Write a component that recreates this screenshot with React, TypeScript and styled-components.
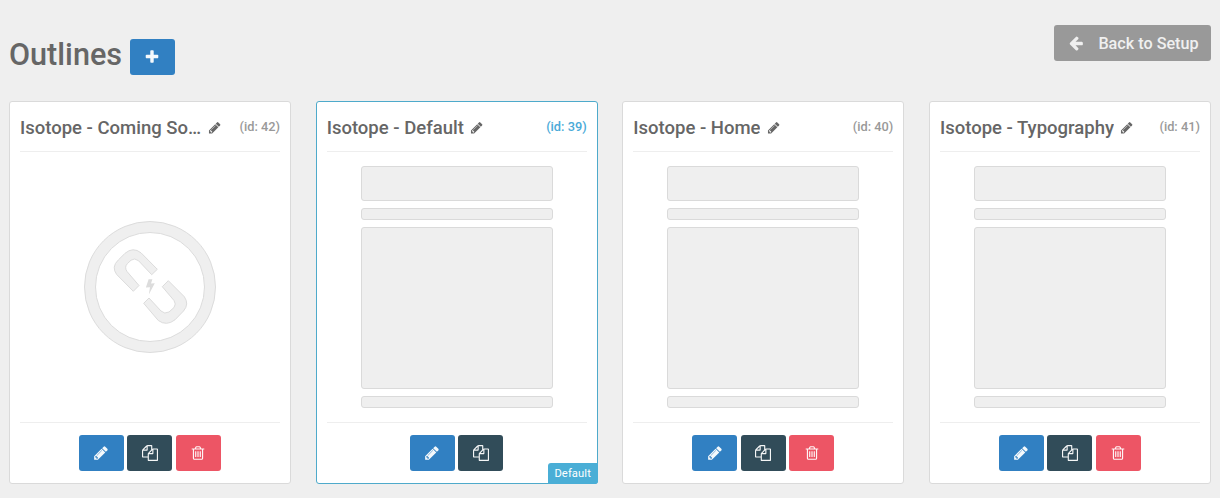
import React from 'react';
import styled, { createGlobalStyle } from 'styled-components';

const GlobalStyle = createGlobalStyle`
  *, *::before, *::after { box-sizing: border-box; }
  body {
    margin: 0;
    background: #efefef;
    color: #666;
    font: 500 16px/24px Roboto, "Liberation Sans", sans-serif;
    -webkit-font-smoothing: antialiased;
  }
`;

const icons = {
  plus: 'M1600 736v192q0 40-28 68t-68 28h-416v416q0 40-28 68t-68 28h-192q-40 0-68-28t-28-68v-416h-416q-40 0-68-28t-28-68v-192q0-40 28-68t68-28h416v-416q0-40 28-68t68-28h192q40 0 68 28t28 68v416h416q40 0 68 28t28 68z',
  back: 'M1664 896v128q0 53-32.5 90.5t-84.5 37.5h-704l293 294q38 36 38 90t-38 90l-75 76q-37 37-90 37-52 0-91-37l-651-652q-37-37-37-90 0-52 37-91l651-650q38-38 91-38 52 0 90 38l75 74q38 38 38 91t-38 91l-293 293h704q52 0 84.5 37.5t32.5 90.5z',
  pencil: 'M491 1536l91-91-235-235-91 91v107h128v128h107zm523-928q0-22-22-22-10 0-17 7l-542 542q-7 7-7 17 0 22 22 22 10 0 17-7l542-542q7-7 7-17zm-54-192l416 416-832 832h-416v-416zm683 96q0 53-37 90l-166 166-416-416 166-165q36-38 90-38 53 0 91 38l235 234q37 39 37 91z',
  copy: 'M1696 384q40 0 68 28t28 68v1216q0 40-28 68t-68 28h-960q-40 0-68-28t-28-68v-288h-544q-40 0-68-28t-28-68v-672q0-40 20-88t48-76l408-408q28-28 76-48t88-20h416q40 0 68 28t28 68v328q68-40 128-40h416zm-544 213l-299 299h299v-299zm-640-384l-299 299h299v-299zm196 647l316-316v-416h-384v416q0 40-28 68t-68 28h-416v640h512v-256q0-40 20-88t48-76zm956 804v-1152h-384v416q0 40-28 68t-68 28h-416v640h896z',
  trash: 'M704 736v576q0 14-9 23t-23 9h-64q-14 0-23-9t-9-23v-576q0-14 9-23t23-9h64q14 0 23 9t9 23zm256 0v576q0 14-9 23t-23 9h-64q-14 0-23-9t-9-23v-576q0-14 9-23t23-9h64q14 0 23 9t9 23zm256 0v576q0 14-9 23t-23 9h-64q-14 0-23-9t-9-23v-576q0-14 9-23t23-9h64q14 0 23 9t9 23zm128 724v-948h-896v948q0 22 7 40.5t14.5 27 10.5 8.5h832q3 0 10.5-8.5t14.5-27 7-40.5zm-672-1076h448l-48-117q-7-9-17-11h-317q-10 2-17 11zm928 32v64q0 14-9 23t-23 9h-96v948q0 83-47 143.5t-113 60.5h-832q-66 0-113-58.5t-47-141.5v-952h-96q-14 0-23-9t-9-23v-64q0-14 9-23t23-9h309l70-167q15-37 54-63t79-26h320q40 0 79 26t54 63l70 167h309q14 0 23 9t9 23z',
};

const Svg = styled.svg<{ $size: number }>`
  width: ${p => p.$size}px;
  height: ${p => p.$size}px;
  fill: currentColor;
  flex: none;
`;

const Icon = ({ name, size = 16 }: { name: keyof typeof icons; size?: number }) => (
  <Svg $size={size} viewBox="0 0 1792 1792" aria-hidden="true">
    <path d={icons[name]} />
  </Svg>
);

const Page = styled.main`
  width: 1220px;
  height: 498px;
  padding: 25px 9px 0;
  overflow: hidden;
`;

const Header = styled.header`
  display: flex;
  align-items: flex-start;
  justify-content: space-between;
  height: 76px;
`;

const Heading = styled.div`
  display: flex;
  align-items: center;
  gap: 8px;
  padding-top: 14px;
`;

const Title = styled.h1`
  margin: 0;
  font-size: 30.6px;
  font-weight: 500;
  line-height: 30px;
  padding-bottom: 4px;
`;

const tones = { blue: '#3180c2', dark: '#314c59', red: '#ed5565', grey: '#999' };

const Button = styled.button<{ $tone: keyof typeof tones }>`
  display: flex;
  align-items: center;
  justify-content: center;
  min-width: 44.8px;
  height: 36px;
  padding: 0;
  border: 0;
  border-radius: 3px;
  background: ${p => tones[p.$tone]};
  color: rgba(255, 255, 255, 0.95);
  font: inherit;
`;

const BackButton = styled(Button)`
  width: 157px;
  gap: 14px;
  padding-left: 2px;
  color: #f0f0f0;
  font-size: 16.2px;
`;

const BackLabel = styled.span`
  padding-top: 2px;
`;

const Cards = styled.section`
  display: grid;
  grid-template-columns: repeat(4, 282px);
  justify-content: space-between;
`;

const Card = styled.article<{ $active?: boolean }>`
  position: relative;
  display: flex;
  flex-direction: column;
  height: 383px;
  padding: 0 10px;
  border: 1px solid ${p => (p.$active ? '#4eaacb' : '#dadada')};
  border-radius: 3px;
  background: #fff;
`;

const CardHeader = styled.header`
  display: flex;
  align-items: center;
  height: 50px;
  border-bottom: 1px solid #eee;
  padding-top: 3px;
`;

const Name = styled.h2`
  margin: 0 6.4px 0 0;
  max-width: 181.5px;
  overflow: hidden;
  text-overflow: ellipsis;
  white-space: nowrap;
  font-size: 18.5px;
  font-weight: 500;
  line-height: 26px;
`;

const Id = styled.span<{ $active?: boolean }>`
  margin-left: auto;
  padding-bottom: 2px;
  font-size: 12.8px;
  font-weight: 500;
  line-height: 20px;
  color: ${p => (p.$active ? '#4aaad8' : '#999')};
`;

const Preview = styled.div`
  display: flex;
  flex-direction: column;
  align-items: center;
  justify-content: center;
  gap: 7px;
  height: 271px;
  border-bottom: 1px solid #eee;
`;

const Block = styled.div<{ $height: number }>`
  width: 192px;
  height: ${p => p.$height}px;
  border: 1px solid #dadada;
  border-radius: 3px;
  background: #efefef;
`;

const Actions = styled.footer`
  display: flex;
  justify-content: center;
  gap: 3.8px;
  padding: 12px 0.4px 0 0;
`;

const DefaultTag = styled.span`
  position: absolute;
  right: -1px;
  bottom: -1px;
  width: 50px;
  height: 21px;
  border-radius: 3px 0 3px 0;
  background: #4aaed6;
  color: #fff;
  font-size: 11.2px;
  font-weight: 400;
  letter-spacing: 0.1px;
  line-height: 21px;
  text-align: center;
`;

const Offline = () => (
  <svg width="134" height="134" viewBox="0 0 134 134" fill="#efefef" stroke="#dcdcdc" strokeWidth="1">
    <circle cx="67" cy="67" r="65.5" />
    <circle cx="67" cy="67" r="54.5" fill="#fff" />
    <path d="M74.300 49.300 L58 32.800 Q50 26.500 42 33.300 L35.300 40 Q28 47 33.700 54.500 L50.300 71.300 L56 65.500 L44 51.500 Q41 47 44.500 43.500 L48 40.200 Q51.500 37.500 55.500 40.700 L68.700 54.700 Z" />
    <path d="M85.300 60.700 L101.300 76.700 Q106.500 84 100.500 91 L92 99.800 Q83.500 106.500 75.300 100.500 L60.700 83.300 L66 78 L78 91 Q81.500 94.500 86 92 L91 87.500 Q93.500 84 91 80.500 L79.300 66.700 Z" />
    <path d="M65.600 59.300h3.800l-1.400 4.200 3.800-.2-6 11.200 1.200-7.200-4.100.2z" fill="#dcdcdc" stroke="none" />
  </svg>
);

const outlines = [
  { name: 'Isotope - Coming Soon', id: 42, offline: true },
  { name: 'Isotope - Default', id: 39, active: true },
  { name: 'Isotope - Home', id: 40 },
  { name: 'Isotope - Typography', id: 41 },
];

export default function App() {
  return (
    <Page>
      <GlobalStyle />
      <Header>
        <Heading>
          <Title>Outlines</Title>
          <Button $tone="blue" aria-label="Add outline"><Icon name="plus" /></Button>
        </Heading>
        <BackButton $tone="grey"><Icon name="back" /><BackLabel>Back to Setup</BackLabel></BackButton>
      </Header>
      <Cards>
        {outlines.map(o => (
          <Card key={o.id} $active={o.active}>
            <CardHeader>
              <Name>{o.name}</Name>
              <Icon name="pencil" size={13.5} />
              <Id $active={o.active}>(id: {o.id})</Id>
            </CardHeader>
            <Preview>
              {o.offline ? <Offline /> : [35, 12, 162, 12].map((h, i) => <Block key={i} $height={h} />)}
            </Preview>
            <Actions>
              <Button $tone="blue" aria-label="Edit"><Icon name="pencil" /></Button>
              <Button $tone="dark" aria-label="Duplicate"><Icon name="copy" /></Button>
              {!o.active && <Button $tone="red" aria-label="Delete"><Icon name="trash" /></Button>}
            </Actions>
            {o.active && <DefaultTag>Default</DefaultTag>}
          </Card>
        ))}
      </Cards>
    </Page>
  );
}
